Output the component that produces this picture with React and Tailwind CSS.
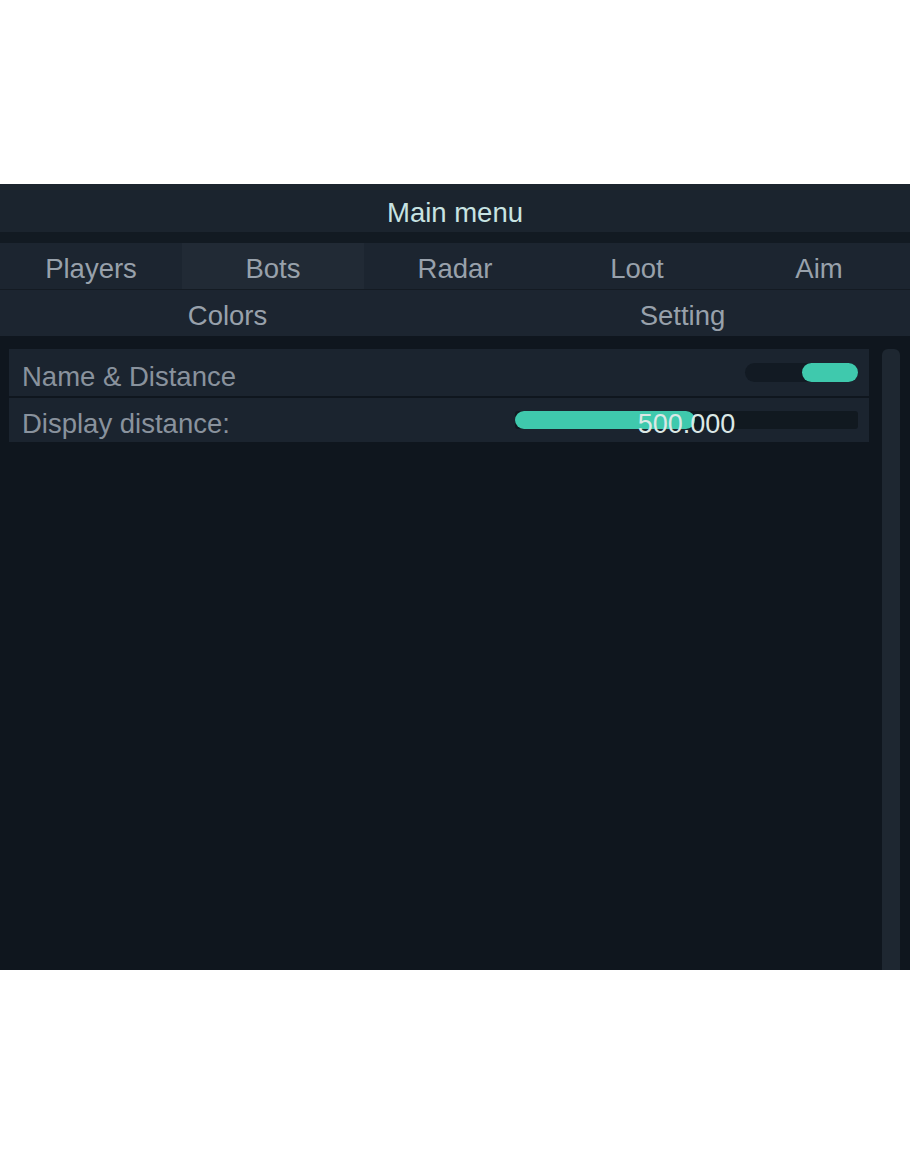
const tabs = ['Players', 'Bots', 'Radar', 'Loot', 'Aim'];

function Toggle() {
  return (
    <div className="flex h-[19px] w-[113px] justify-end rounded-full bg-[#121a23]">
      <div className="h-full w-[56px] rounded-full bg-[#3fc9ad]" />
    </div>
  );
}

function Slider({ value, pct }) {
  return (
    <div className="relative h-[18px] w-[343px] rounded-[3px] bg-[#111920]">
      <div className="h-full rounded-full bg-[#3fc9ad]" style={{ width: `${pct}%` }} />
      <div className="absolute inset-0 flex items-center justify-center pt-[8px] text-[27px] leading-none text-[#dbe8e6]">
        {value}
      </div>
    </div>
  );
}

export default function App() {
  return (
    <div className="h-[1155px] bg-white pt-[184px] font-['Liberation_Sans',Arial,sans-serif]">
      <div className="flex h-[786px] flex-col bg-[#0f161e] text-[27.5px] leading-none">
        <div className="flex h-[48px] items-center justify-center bg-[#1b242e] pt-[10px] text-[#c8e3e2]">Main menu</div>
        <div className="h-[11px] bg-[#121a22]" />
        <div className="grid h-[47px] grid-cols-5 border-b border-[#141b23] bg-[#1c2530] text-[#98a1ab]">
          {tabs.map((t) => (
            <div
              key={t}
              className={`flex items-center justify-center pt-[6px] ${t === 'Bots' ? 'bg-[#212a35]' : ''}`}
            >
              {t}
            </div>
          ))}
        </div>
        <div className="grid h-[46px] grid-cols-2 bg-[#1c2530] text-[#98a1ab]">
          <div className="flex items-center justify-center pt-[6px]">Colors</div>
          <div className="flex items-center justify-center pt-[6px]">Setting</div>
        </div>
        <div className="flex flex-1 pt-[13px] pl-[9px]">
          <div className="flex w-[860px] flex-col gap-[2px]">
            <div className="flex h-[47px] items-center justify-between bg-[#1b242f] pr-[11px] pl-[13px]">
              <span className="pt-[8px] text-[#89929d]">Name &amp; Distance</span>
              <Toggle />
            </div>
            <div className="flex h-[44px] items-center justify-between bg-[#1b242f] pr-[11px] pl-[13px]">
              <span className="pt-[8px] text-[#89929d]">Display distance:</span>
              <Slider value="500.000" pct={52.5} />
            </div>
          </div>
          <div className="ml-[13px] w-[18px] rounded-t-[6px] bg-[#1e2731]" />
        </div>
      </div>
    </div>
  );
}
